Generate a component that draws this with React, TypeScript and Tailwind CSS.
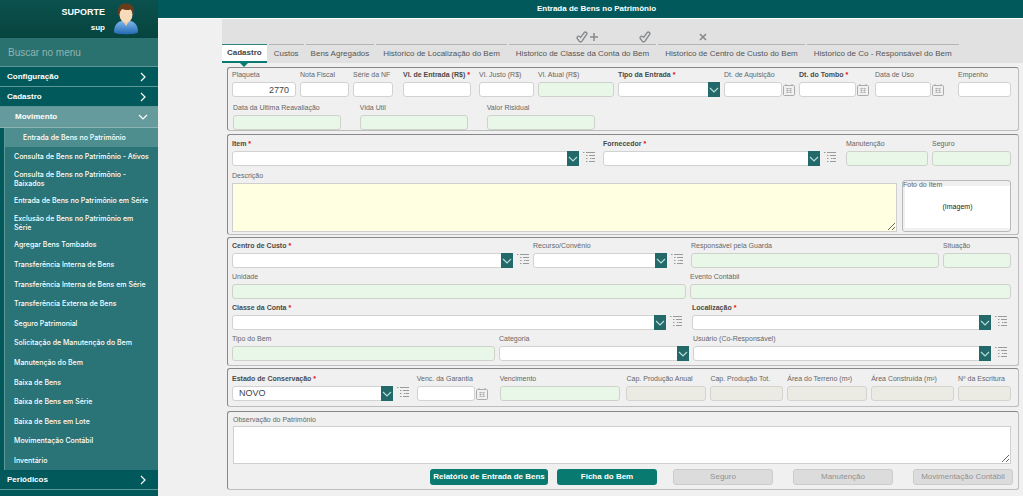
import { useId, useState } from 'react';
import type { ReactNode } from 'react';
import { clsx } from 'clsx';

type Tone = 'normal' | 'readonly' | 'disabled';

interface FieldProps {
  label: string;
  required?: boolean;
  className?: string;
}

const submenu = [
  'Consulta de Bens no Patrimônio - Ativos',
  'Consulta de Bens no Patrimônio - Baixados',
  'Entrada de Bens no Patrimônio em Série',
  'Exclusão de Bens no Patrimônio em Série',
  'Agregar Bens Tombados',
  'Transferência Interna de Bens',
  'Transferência Interna de Bens em Série',
  'Transferência Externa de Bens',
  'Seguro Patrimonial',
  'Solicitação de Manutenção do Bem',
  'Manutenção do Bem',
  'Baixa de Bens',
  'Baixa de Bens em Série',
  'Baixa de Bens em Lote',
  'Movimentação Contábil',
  'Inventário',
];

const tabs = [
  'Cadastro',
  'Custos',
  'Bens Agregados',
  'Historico de Localização do Bem',
  'Historico de Classe da Conta do Bem',
  'Historico de Centro de Custo do Bem',
  'Historico de Co - Responsável do Bem',
];

function Chevron({ down = false, className }: { down?: boolean; className?: string }) {
  return (
    <svg viewBox="0 0 10 10" className={className} fill="none" stroke="currentColor" strokeWidth="1.2" aria-hidden="true">
      <path d={down ? 'M1 3l4 4 4-4' : 'M3 1l4 4-4 4'} />
    </svg>
  );
}

function TreeIcon() {
  return (
    <svg viewBox="0 0 12 12" className="h-3 w-3" fill="none" stroke="#9a9a9a" aria-hidden="true">
      <path d="M0 1.5h1.5M3 1.5h9M3 4.5h1.5M6 4.5h6M3 7.5h1.5M7 7.5h1.5M9 7.5h3M3 10.5h1.5M6 10.5h6" />
    </svg>
  );
}

function CalendarIcon() {
  return (
    <svg viewBox="0 0 12 12" className="h-3 w-3" fill="none" stroke="#ababab" aria-hidden="true">
      <rect x="0.5" y="1.5" width="11" height="10" rx="1" />
      <path d="M3 0v2M9 0v2" />
      <path d="M3 4.5h6M3 6.5h6M3 8.5h6M4.500 4v5M7.500 4v5" strokeWidth="0.6" />
    </svg>
  );
}

function CheckIcon() {
  return (
    <svg viewBox="0 0 12 12" className="h-3 w-3" fill="none" stroke="#86898c" strokeWidth="1.4" strokeLinejoin="round" aria-hidden="true">
      <path d="M1 7.2C1 5 3.200 4.200 4.600 6.400L8.200 1.600C9.400.4 11.600 1.600 10.600 3.400L6 10.200C5.200 11.300 3.800 11.200 3.200 10.200z" />
    </svg>
  );
}

function Avatar() {
  return (
    <svg viewBox="0 0 26 32" className="h-8 w-[26px]" aria-hidden="true">
      <defs>
        <linearGradient id="shirt" x1="0" y1="0" x2="0" y2="1">
          <stop offset="0" stopColor="#7cb8ea" />
          <stop offset="1" stopColor="#2468b4" />
        </linearGradient>
      </defs>
      <path d="M1 29c0-7 4-11 8-11h8c4 0 8 4 8 11 0 3-24 3-24 0z" fill="url(#shirt)" />
      <path d="M9 17h8l-4 6z" fill="#f0c9a0" />
      <ellipse cx="13" cy="11.5" rx="6.5" ry="8" fill="#f8dcb9" />
      <path d="M5.500 13C3.500 5 7 .5 13 .5S22.500 5 20.500 13c-1-3-1-5-3-6.500-3 1-6 .5-8-.5C7 7.500 6.500 10 5.500 13z" fill="#6b3c1c" />
    </svg>
  );
}

function Label({ id, label, required }: { id: string; label: string; required?: boolean }) {
  return (
    <label htmlFor={id} className={clsx('block whitespace-nowrap text-[7px] leading-[10px]', required ? 'font-bold text-[#4a4a4a]' : 'text-[#666666]')}>
      {label}
      {required && <span className="text-red-600"> *</span>}
    </label>
  );
}

interface TextFieldProps extends FieldProps {
  tone?: Tone;
  calendar?: boolean;
  defaultValue?: string;
}

function TextField({ label, required, className, tone = 'normal', calendar, defaultValue }: TextFieldProps) {
  const id = useId();
  return (
    <div className={clsx('flex min-w-0 flex-col gap-0.5', className)}>
      <Label id={id} label={label} required={required} />
      <div className="flex items-center gap-px">
        <input
          id={id}
          type="text"
          defaultValue={defaultValue}
          readOnly={tone === 'readonly'}
          disabled={tone === 'disabled'}
          className={clsx(
            'h-[15px] w-full min-w-0 flex-1 rounded-[3px] border px-1.5 text-right text-[9px] text-[#444444] outline-none',
            tone === 'normal' && 'border-[#d2d2d2] bg-white',
            tone === 'readonly' && 'border-[#cdd3cb] bg-[#e8f7e7]',
            tone === 'disabled' && 'border-[#d3d3cf] bg-[#ebebe4]',
          )}
        />
        {calendar && (
          <button type="button" aria-label={`Calendário: ${label}`} className="shrink-0">
            <CalendarIcon />
          </button>
        )}
      </div>
    </div>
  );
}

interface SelectFieldProps extends FieldProps {
  lookup?: boolean;
  option?: string;
}

function SelectField({ label, required, className, lookup, option = '' }: SelectFieldProps) {
  const id = useId();
  return (
    <div className={clsx('flex min-w-0 flex-col gap-0.5', className)}>
      <Label id={id} label={label} required={required} />
      <div className="flex items-start gap-1">
        <div className="relative min-w-0 flex-1">
          <select id={id} className="block h-[15px] w-full appearance-none rounded-[3px] border border-[#d2d2d2] bg-white px-1.5 text-[9px] leading-[13px] text-[#444444] outline-none">
            <option>{option}</option>
          </select>
          <span className="pointer-events-none absolute inset-y-0 right-0 flex w-3 items-center justify-center bg-[#23696a] text-[#b5dcd8]">
            <Chevron down className="h-2.5 w-2.5" />
          </span>
        </div>
        {lookup && (
          <button type="button" aria-label={`Consultar ${label}`} className="shrink-0">
            <TreeIcon />
          </button>
        )}
      </div>
    </div>
  );
}

function Panel({ children, className }: { children: ReactNode; className?: string }) {
  return (
    <section className={clsx('rounded-[3px] border border-[#bdbdc0] border-t-[#88888c] border-l-[#88888c] pr-[7px] pl-1', className)}>
      {children}
    </section>
  );
}

function MenuButton({ label }: { label: string }) {
  return (
    <button type="button" className="flex h-5 w-full shrink-0 items-center justify-between border-b border-[#5d9796] bg-[#02595b] pr-[10px] pl-[7px] text-[8px] font-bold text-white">
      {label}
      <Chevron className="h-2.5 w-2.5" />
    </button>
  );
}

function Sidebar() {
  return (
    <aside className="flex w-[158px] shrink-0 flex-col overflow-hidden bg-[#02595b] text-white">
      <div className="flex h-[38px] shrink-0 items-center justify-end gap-2 bg-linear-to-b from-[#0b514d] to-[#07443f] pr-[19px]">
        <div className="flex flex-col items-end gap-1 pt-0.5 font-bold">
          <span className="text-[9px] leading-[11px]">SUPORTE</span>
          <span className="text-[8px] leading-[11px]">sup</span>
        </div>
        <Avatar />
      </div>
      <input
        type="search"
        aria-label="Buscar no menu"
        placeholder="Buscar no menu"
        className="h-7 w-full shrink-0 bg-[#29726f] px-2 text-[10px] text-white outline-none placeholder:text-[#94b3b1]"
      />
      <nav className="border-t border-[#5d9796]">
        <MenuButton label="Configuração" />
        <MenuButton label="Cadastro" />
        <button type="button" className="flex h-[21px] w-full items-center justify-between border-b border-[#8bb5b4] bg-[#659b9c] pr-[10px] pl-[15px] text-[8px] font-bold text-white">
          Movimento
          <Chevron down className="h-2.5 w-2.5" />
        </button>
        <div className="ml-1 border-l border-[#5d9796] bg-[#2a7376] font-[Inter,sans-serif] text-[7px] leading-[9px] font-medium">
          <a href="#entrada" className="flex h-[19px] items-center bg-[#4f8e8f] pl-[18px]">Entrada de Bens no Patrimônio</a>
          <ul className="flex min-h-[323px] flex-col justify-between">
            {submenu.map((item) => (
              <li key={item}>
                <a href="#menu" className="flex min-h-[19px] items-center py-[3px] pr-1.5 pl-[9px]">{item}</a>
              </li>
            ))}
          </ul>
        </div>
        <MenuButton label="Periódicos" />
      </nav>
    </aside>
  );
}

function Toolbar() {
  return (
    <div className="flex h-6 items-end pb-px pl-[354px]">
      <button type="button" aria-label="Salvar e novo" className="flex items-center gap-px">
        <CheckIcon />
        <svg viewBox="0 0 10 10" className="h-2.5 w-2.5" stroke="#86898c" strokeWidth="1.5" aria-hidden="true">
          <path d="M5 1v8M1 5h8" />
        </svg>
      </button>
      <button type="button" aria-label="Salvar" className="ml-10"><CheckIcon /></button>
      <button type="button" aria-label="Cancelar" className="ml-12 pb-0.5">
        <svg viewBox="0 0 8 8" className="h-2 w-2" stroke="#86898c" strokeWidth="1.600" aria-hidden="true">
          <path d="M1 1l6 6M7 1L1 7" />
        </svg>
      </button>
    </div>
  );
}

function TabBar() {
  const [active, setActive] = useState(tabs[0]);
  return (
    <div role="tablist" className="flex h-[19px] gap-0.5">
      {tabs.map((tab) => (
        <button
          key={tab}
          type="button"
          role="tab"
          aria-selected={tab === active}
          onClick={() => setActive(tab)}
          className={clsx(
            'relative h-[19px] border-t text-[8px] whitespace-nowrap',
            tab.startsWith('Historico') ? 'px-[7px]' : 'px-[5px]',
            tab === active ? 'border-b-2 border-t-[#2f8580] border-b-[#087a70] bg-white font-bold text-[#444444]' : 'border-t-[#b5b5b5] text-[#555555]',
          )}
        >
          {tab}
          {tab === active && (
            <svg viewBox="0 0 12 6" className="absolute top-full left-4 h-1.5 w-3" aria-hidden="true">
              <path d="M0 0h12L6 6z" fill="#087a70" />
            </svg>
          )}
        </button>
      ))}
    </div>
  );
}

const primaryButton = 'h-4 rounded-[3px] bg-[#087a70] text-[8px] font-bold whitespace-nowrap text-white';
const disabledButton = 'h-4 w-[100px] rounded-[3px] border border-[#cccccc] bg-[#dcdcdc] text-[8px] whitespace-nowrap text-[#929292]';

export default function App() {
  return (
    <div className="flex h-screen overflow-hidden bg-[#f0f0f0] font-['Liberation_Sans',Arial,sans-serif]">
      <Sidebar />
      <div className="flex min-w-0 flex-1 flex-col">
        <header className="flex h-[19px] shrink-0 items-center justify-center border-b border-white bg-[#02595b] pl-3">
          <h1 className="text-[8px] font-bold text-white">Entrada de Bens no Patrimônio</h1>
        </header>
        <main className="ml-16 flex flex-col">
          <div className="bg-[#e1e1e1] pt-px">
            <Toolbar />
            <TabBar />
          </div>

          <form className="mt-1 mr-1 ml-[5px] flex flex-col gap-0.5">
            <Panel className="mb-px pt-0.5">
              <div className="grid grid-cols-[64fr_49fr_46fr_72fr_55fr_76fr_102fr_71fr_72fr_79fr_53fr] gap-1">
                <TextField label="Plaqueta" defaultValue="2770" />
                <TextField label="Nota Fiscal" />
                <TextField label="Série da NF" className="pr-1.5" />
                <TextField label="Vl. de Entrada (R$)" required className="pr-1" />
                <TextField label="Vl. Justo (R$)" />
                <TextField label="Vl. Atual (R$)" tone="readonly" />
                <SelectField label="Tipo da Entrada" required />
                <TextField label="Dt. de Aquisição" calendar />
                <TextField label="Dt. do Tombo" required calendar className="pr-0.5" />
                <TextField label="Data de Uso" calendar className="pr-2.5" />
                <TextField label="Empenho" />
              </div>
              <div className="mt-1.5 grid grid-cols-[108fr_108fr_108fr_398fr] gap-[19px] pl-px">
                <TextField label="Data da Ultima Reavaliação" tone="readonly" />
                <TextField label="Vida Util" tone="readonly" />
                <TextField label="Valor Risidual" tone="readonly" />
              </div>
            </Panel>

            <Panel className="pt-1 pb-0.5">
              <div className="grid grid-cols-[367fr_239fr_82fr_79fr] gap-1">
                <SelectField label="Item" required lookup className="pr-1" />
                <SelectField label="Fornecedor" required lookup className="pr-1.5" />
                <TextField label="Manutenção" tone="readonly" />
                <TextField label="Seguro" tone="readonly" />
              </div>
              <div className="mt-[5px] flex gap-[5px]">
                <div className="flex flex-1 flex-col gap-0.5">
                  <Label id="descricao" label="Descrição" />
                  <textarea id="descricao" className="h-[49px] w-full border border-[#cfcfcf] bg-[#ffffe1] text-[9px] outline-none" />
                </div>
                <div className="flex h-[52px] w-[109px] flex-col self-end rounded-[3px] border border-[#b9b9bd] pb-[3px] pl-[2px]">
                  <span className="relative -ml-[2px] h-[5px] text-[7px] leading-[8px] text-[#666666]">Foto do Item</span>
                  <div className="flex flex-1 items-center justify-center bg-white text-[7px] text-[#222222]">(Imagem)</div>
                </div>
              </div>
            </Panel>

            <Panel className="flex flex-col gap-1 pt-[3px] pb-1">
              <div className="grid grid-cols-[297fr_154fr_248fr_68fr] gap-1">
                <SelectField label="Centro de Custo" required lookup />
                <SelectField label="Recurso/Convênio" lookup className="pr-1" />
                <TextField label="Responsável pela Guarda" tone="readonly" />
                <TextField label="Situação" tone="readonly" />
              </div>
              <div className="grid grid-cols-[454fr_321fr] gap-1">
                <TextField label="Unidade" tone="readonly" />
                <TextField label="Evento Contábil" tone="readonly" />
              </div>
              <div className="grid grid-cols-[456fr_319fr] gap-1">
                <SelectField label="Classe da Conta" required lookup className="pr-1.5" />
                <SelectField label="Localização" required lookup className="pr-1" />
              </div>
              <div className="grid grid-cols-[263fr_190fr_318fr] gap-1">
                <TextField label="Tipo do Bem" tone="readonly" />
                <SelectField label="Categoria" />
                <SelectField label="Usuário (Co-Responsável)" lookup className="pr-1" />
              </div>
            </Panel>

            <Panel className="pt-[5px] pb-[5px]">
              <div className="grid grid-cols-[181fr_79fr_123fr_80fr_73fr_80fr_83fr_53fr] gap-1">
                <SelectField label="Estado de Conservação" required lookup option="NOVO" className="pr-1" />
                <TextField label="Venc. da Garantia" calendar className="pr-2" />
                <TextField label="Vencimento" tone="readonly" className="pr-0.5" />
                <TextField label="Cap. Produção Anual" tone="disabled" />
                <TextField label="Cap. Produção Tot." tone="disabled" />
                <TextField label="Área do Terreno (m²)" tone="disabled" />
                <TextField label="Área Construída (m²)" tone="disabled" />
                <TextField label="Nº da Escritura" tone="disabled" />
              </div>
            </Panel>

            <Panel className="mt-0.5 pt-[3px] pb-1">
              <div className="flex flex-col gap-px pl-px">
                <Label id="observacao" label="Observação do Patrimônio" />
                <textarea id="observacao" className="h-[38px] w-full border border-[#cfcfcf] bg-white text-[9px] outline-none" />
              </div>
              <div className="mt-[5px] -mr-0.5 flex justify-end gap-4">
                <div className="flex gap-[9px]">
                  <button type="button" className={clsx(primaryButton, 'w-[118px]')}>Relatório de Entrada de Bens</button>
                  <button type="button" className={clsx(primaryButton, 'w-[100px]')}>Ficha do Bem</button>
                </div>
                <div className="flex gap-5">
                  <button type="button" disabled className={disabledButton}>Seguro</button>
                  <button type="button" disabled className={disabledButton}>Manutenção</button>
                  <button type="button" disabled className={disabledButton}>Movimentação Contábil</button>
                </div>
              </div>
            </Panel>
          </form>
        </main>
      </div>
    </div>
  );
}
